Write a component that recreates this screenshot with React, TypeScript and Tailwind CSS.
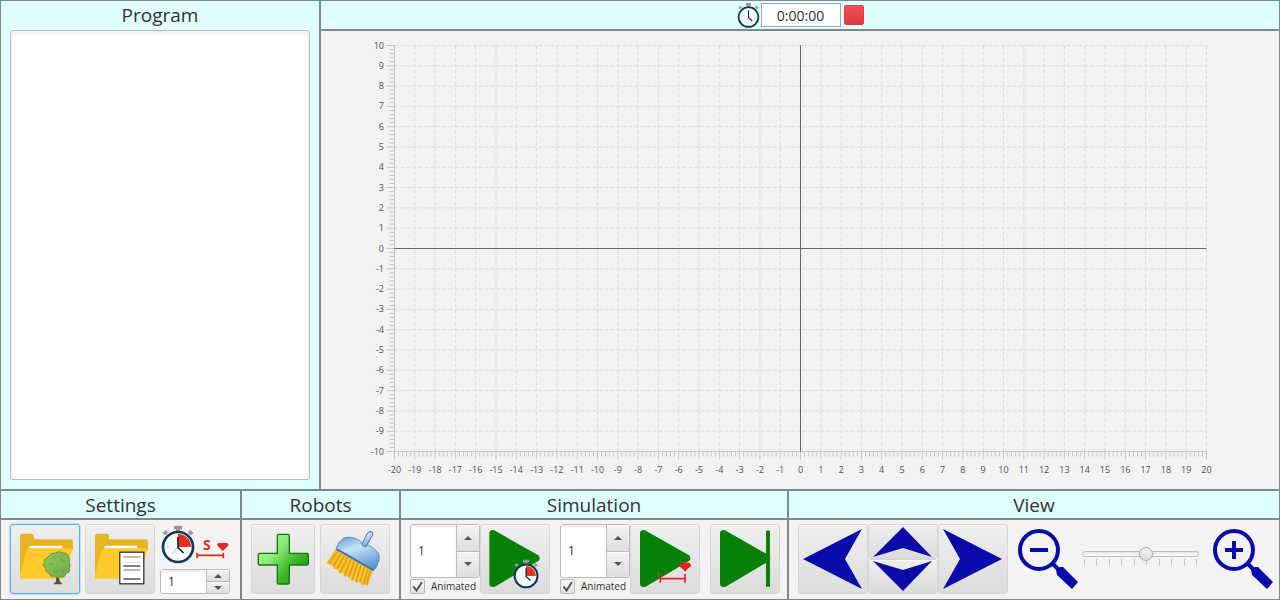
import React, { useId, useState } from "react";

const FONT = "font-['Open_Sans','Noto_Sans',sans-serif]";

const range = (from: number, to: number) =>
  Array.from({ length: to - from + 1 }, (_, i) => from + i);

/* ---------- chart ---------- */

const UNIT = 20.3;
const LEFT = 394.5;
const RIGHT = LEFT + 40 * UNIT;
const TOP = 45.5;
const BOTTOM = TOP + 20 * UNIT;
const xAt = (v: number) => LEFT + (v + 20) * UNIT;
const yAt = (v: number) => BOTTOM - (v + 10) * UNIT;

function Chart() {
  return (
    <svg viewBox="321 31 958 458" className="block h-full w-full" role="img" aria-label="Robot field">
      <g stroke="#dcdcdc" strokeDasharray="4 2" fill="none">
        {range(-19, 20).map((v) => (
          <path key={`x${v}`} d={`M${xAt(v)} ${BOTTOM}V${TOP}`} />
        ))}
        {range(-9, 10).map((v) => (
          <path key={`y${v}`} d={`M${LEFT} ${yAt(v)}H${RIGHT}`} />
        ))}
      </g>
      <g stroke="#c4c4c4" fill="none">
        {range(0, 200).map((i) => (
          <path key={`mx${i}`} d={`M${LEFT + (i * UNIT) / 5} ${BOTTOM}v${i % 5 ? 5 : 8}`} />
        ))}
        {range(0, 100).map((i) => (
          <path key={`my${i}`} d={`M${LEFT} ${BOTTOM - (i * UNIT) / 5}h${i % 5 ? -5 : -8}`} />
        ))}
        <path d={`M${LEFT} ${TOP}V${BOTTOM}H${RIGHT}`} />
      </g>
      <path d={`M800.5 ${TOP - 0.5}V${BOTTOM}M${LEFT} 248.5H${RIGHT}`} stroke="#666" fill="none" />
      <g fill="#505050" fontSize="9">
        {range(-20, 20).map((v) => (
          <text key={`tx${v}`} x={xAt(v)} y="473" textAnchor="middle">
            {v}
          </text>
        ))}
        {range(-10, 10).map((v) => (
          <text key={`ty${v}`} x="384" y={yAt(v) + 3} textAnchor="end">
            {v}
          </text>
        ))}
      </g>
    </svg>
  );
}

/* ---------- icons ---------- */

function WatchFace({ wedge }: { wedge: boolean }) {
  return (
    <g>
      <path d="M37 0h24v11h-24zM43 11h12v6h-12zM2 22l11-9 7 8-9 8zM96 22l-11-9-7 8 9 8z" fill="#999" />
      <circle cx="49" cy="64" r="45" fill="#f8fbfd" stroke="#0b3958" strokeWidth="8" />
      {wedge && <path d="M49 64V25a39 39 0 0 1 39 39z" fill="#e7301a" />}
      <path d="M49 64L33 82M16 64h5M77 64h5M49 97v5" stroke="#b9c2c9" strokeWidth="3" />
      <path d="M49 34V66L66 82" fill="none" stroke="#12263a" strokeWidth="5" />
    </g>
  );
}

function RangeIcon() {
  return (
    <svg viewBox="480 121 210 129" className="h-[43px] w-[70px]" aria-hidden="true">
      <g transform="translate(485 126)">
        <WatchFace wedge />
      </g>
      <text x="609" y="198" fontSize="42" fontWeight="700" fill="#e02b18">
        S
      </text>
      <path d="M591 215h79M591 207v17M670 207v17" stroke="#e02b18" strokeWidth="5" fill="none" />
      <path d="M651 183l4-5h27l4 5-5 7-13 12-12-12z" fill="#e02b18" />
    </svg>
  );
}

function Folder() {
  return (
    <g>
      <path d="M60 155q0-8 8-8h26q8 0 8 9v8h110q6 0 7 7v24H200L70 280H60z" fill="#e6b526" />
      <path d="M88 186q0-3 3-3h93q3 0 3 3v14H88z" fill="#fff" />
      <path d="M86 191h124q7 0 6 7l-20 77q-2 7-9 7H64q-7 0-4-9l19-76q2-6 7-6z" fill="#ffca28" />
    </g>
  );
}

function FolderTreeIcon() {
  const id = useId();
  return (
    <svg viewBox="30 118 210 210" className="size-[70px]" aria-hidden="true">
      <defs>
        <linearGradient id={id} x1="0" y1="0" x2="1" y2="1">
          <stop offset="0" stopColor="#93c85f" />
          <stop offset="1" stopColor="#6dab47" />
        </linearGradient>
      </defs>
      <Folder />
      <path d="M166 262h12q-2 24 3 30l7 7h-29l8-7q3-10-1-30z" fill="#6a4a3a" />
      <path
        d="M150 212q4-8 16-7 12-8 24 0 14-1 15 12 8 8 2 16 7 9 1 17 4 14-10 16-4 14-18 10-9 7-16-1-14 2-17-10-13-3-9-14-12-7-5-17-2-13 9-13 0-6 8-9z"
        fill={`url(#${id})`}
        stroke="#5f9a3d"
        strokeWidth="3"
      />
      <path d="M146 236q8 7 15 0M182 222q3 9 12 8M160 260q9 5 15-3M188 252q-2 10 7 12M158 214q8 0 8 9" fill="none" stroke="#5f9a3d" strokeWidth="2.5" />
    </svg>
  );
}

function FolderListIcon() {
  return (
    <svg viewBox="30 118 210 210" className="size-[70px]" aria-hidden="true">
      <Folder />
      <rect x="134.500" y="202.500" width="72" height="95" fill="#fff" stroke="#000" strokeWidth="3" />
      <path d="M145 217h51M145 256h51" stroke="#777" strokeWidth="3" />
      <path d="M145 233h51" stroke="#ddd" strokeWidth="3" />
      <path d="M145 244h51M145 283h51" stroke="#000" strokeWidth="3" />
    </svg>
  );
}

function PlusIcon() {
  const id = useId();
  return (
    <svg viewBox="33 118 192 210" className="h-[70px] w-[64px]" aria-hidden="true">
      <defs>
        <linearGradient id={id} x1="0" y1="0.1" x2="1" y2="0.9">
          <stop offset="0" stopColor="#b4ff9c" />
          <stop offset="0.35" stopColor="#8ee878" />
          <stop offset="0.65" stopColor="#3db82a" />
          <stop offset="1" stopColor="#0e8f08" />
        </linearGradient>
      </defs>
      <path
        d="M116 149h28q4 0 4 4v53h53q4 0 4 4v27q0 4-4 4h-53v53q0 4-4 4h-28q-4 0-4-4v-53H59q-4 0-4-4v-27q0-4 4-4h53v-53q0-4 4-4z"
        fill={`url(#${id})`}
        stroke="#0b7d08"
        strokeWidth="4"
      />
    </svg>
  );
}

function BroomIcon() {
  const id = useId();
  return (
    <svg viewBox="241 118 210 210" className="size-[70px]" aria-hidden="true">
      <defs>
        <linearGradient id={id} x1="0.2" y1="0" x2="0.7" y2="1">
          <stop offset="0" stopColor="#6ea6da" />
          <stop offset="0.35" stopColor="#c9e2f7" />
          <stop offset="1" stopColor="#5590cc" />
        </linearGradient>
      </defs>
      <path d="M288 194L400 258 383 305 374 299 368 302 359 291 351 295 343 283 334 287 326 274 317 277 309 264 301 267 292 253 284 254 278 243 261 235z" fill="#f5b51c" />
      <path
        d="M294 200l-25 36M304 206l-23 38M314 212l-22 40M324 218l-22 44M334 224l-20 48M344 230l-18 50M354 236l-17 52M364 241l-15 50M374 247l-13 46M384 253l-12 46M392 257l-12 44"
        stroke="#d28f10"
        strokeWidth="2.5"
      />
      <path d="M299 203l-24 36M309 209l-22 39M319 215l-21 42M329 221l-20 46M339 227l-18 48M349 233l-17 50M359 239l-16 48M369 245l-14 46M379 250l-12 46" stroke="#ffd84c" strokeWidth="2.5" />
      <path d="M366 181l17-35q6-9 14-4 4 4 1 11l-20 34z" fill={`url(#${id})`} stroke="#3c74b4" strokeWidth="3" />
      <path
        d="M290 190q8-22 25-31 24-6 48 11l5 12q5 7 12 4l5-5q21 9 32 25 5 15-3 33-5 14-14 19L290 195z"
        fill={`url(#${id})`}
        stroke="#3c74b4"
        strokeWidth="2"
      />
      <path d="M291 193L402 256" stroke="#3c74b4" strokeWidth="5" />
    </svg>
  );
}

function Play() {
  const id = useId();
  return (
    <g>
      <defs>
        <pattern id={id} width="29" height="23" patternUnits="userSpaceOnUse">
          <rect width="29" height="23" fill="#038003" />
          <path d="M3 4h3M17 2h3M24 9h3M10 11h3M2 18h3M19 17h3M12 20h3" stroke="#128c12" strokeWidth="3" />
        </pattern>
      </defs>
      <path d="M270 145q0-8 10-9 5 0 10 4l127 72q4 3 4 9 0 5-4 8L292 303q-5 4-12 4-10-1-10-8z" fill={`url(#${id})`} />
    </g>
  );
}

function PlayTimeIcon() {
  return (
    <svg viewBox="242 118 210 210" className="size-[70px]" aria-hidden="true">
      <Play />
      <g transform="translate(343 225) scale(.76)">
        <WatchFace wedge />
      </g>
    </svg>
  );
}

function PlayRangeIcon() {
  return (
    <svg viewBox="240 118 210 210" className="size-[70px]" aria-hidden="true">
      <Play />
      <path d="M331 282h74M331 268v26M405 268v26" stroke="#ee1c24" strokeWidth="5" fill="none" />
      <path d="M387 240l6-6h24l6 6-1 5-9 7-7 9-9-9-9-7z" fill="#ee1c24" />
    </svg>
  );
}

function PlayEndIcon() {
  return (
    <svg viewBox="240 118 210 210" className="size-[70px]" aria-hidden="true">
      <Play />
      <path d="M408 138h12v168h-12z" fill="#038003" />
    </svg>
  );
}

function MagnifierIcon({ plus }: { plus?: boolean }) {
  return (
    <svg viewBox="0 0 60 60" className="size-[60px]" aria-hidden="true">
      <circle cx="21" cy="21" r="19" fill="none" stroke="#0a0aab" strokeWidth="4" />
      <path d={plus ? "M12 21h18M21 12v18" : "M12 21h18"} stroke="#0a0aab" strokeWidth="4" />
      <path d="M34 34l7 7" stroke="#0a0aab" strokeWidth="4" />
      <path d="M38 41l4-3h3l15 15-6 7-15-14z" fill="#0a0aab" />
    </svg>
  );
}

function Arrow({ d, className, box }: { d: string; className: string; box: string }) {
  return (
    <svg viewBox={box} className={className} aria-hidden="true">
      <path d={d} fill="#0a0aab" />
    </svg>
  );
}

/* ---------- controls ---------- */

type ToolButtonProps = { label: string; focused?: boolean; className?: string; children: React.ReactNode };

function ToolButton({ label, focused, className = "", children }: ToolButtonProps) {
  const frame = focused
    ? "border-[#4fb6dc] shadow-[0_0_2px_#4fb6dc]"
    : "border-[#d6d6d6] shadow-[inset_0_1px_0_#fafafa]";
  return (
    <button
      type="button"
      aria-label={label}
      className={`flex shrink-0 items-center justify-center overflow-hidden rounded-[3px] border bg-linear-to-b from-[#efefef] to-[#dcdcdc] [&>svg]:shrink-0 ${frame} ${className}`}
    >
      {children}
    </button>
  );
}

function Spinner({ label, className }: { label: string; className: string }) {
  const [value, setValue] = useState(1);
  const step =
    "flex flex-1 items-center justify-center bg-linear-to-b from-[#f4f4f4] to-[#dedede] shadow-[inset_0_1px_0_#fff]";
  return (
    <div className={`flex w-[70px] overflow-hidden rounded-[3px] border border-[#bcbcbc] bg-white ${className}`}>
      <input
        aria-label={label}
        value={value}
        onChange={(e) => setValue(Number(e.target.value) || 0)}
        className="w-0 min-w-0 flex-1 bg-transparent pl-[7px] text-xs text-[#323232] shadow-[inset_0_2px_2px_#eee] outline-none"
      />
      <div className="flex w-[23px] flex-col border-l border-[#bcbcbc]">
        <button type="button" aria-label={`${label} up`} onClick={() => setValue(value + 1)} className={step}>
          <svg viewBox="0 0 8 4" className="h-1 w-2" aria-hidden="true">
            <path d="M0 4L4 0 8 4z" fill="#555" />
          </svg>
        </button>
        <button
          type="button"
          aria-label={`${label} down`}
          onClick={() => setValue(value - 1)}
          className={`border-t border-[#bcbcbc] ${step}`}
        >
          <svg viewBox="0 0 8 4" className="h-1 w-2" aria-hidden="true">
            <path d="M0 0L4 4 8 0z" fill="#555" />
          </svg>
        </button>
      </div>
    </div>
  );
}

function AnimatedSpinner({ label }: { label: string }) {
  return (
    <div className="flex w-[70px] shrink-0 flex-col gap-px">
      <Spinner label={label} className="h-[54px]" />
      <label className="flex items-center gap-1.5 text-[10px] leading-[15px] text-[#323232]">
        <span className="grid shrink-0">
          <input
            type="checkbox"
            defaultChecked
            className="peer col-start-1 row-start-1 size-[15px] appearance-none rounded-[2px] border border-[#b8b8b8] bg-linear-to-b from-[#f8f8f8] to-[#e0e0e0]"
          />
          <svg viewBox="0 0 15 15" className="pointer-events-none invisible col-start-1 row-start-1 size-[15px] peer-checked:visible" aria-hidden="true">
            <path d="M3.500 7.500l3 4L12 3" fill="none" stroke="#555" strokeWidth="2" />
          </svg>
        </span>
        Animated
      </label>
    </div>
  );
}

function Panel({ title, className = "", bodyClass = "", children }: { title: string; className?: string; bodyClass?: string; children: React.ReactNode }) {
  return (
    <section className={`flex flex-col ${className}`}>
      <h2 className="h-[29px] border border-black/45 bg-[#e0ffff] text-center text-[19px] leading-[28px]">{title}</h2>
      <div className={`flex flex-1 items-start border border-black/45 pt-1 pb-[5px] pl-[9px] ${bodyClass}`}>{children}</div>
    </section>
  );
}

export default function App() {
  return (
    <div className={`flex min-h-screen flex-col bg-[#f3f3f3] text-[#323232] ${FONT}`}>
      <main className="flex flex-1 items-stretch">
        <section className="flex w-1/4 flex-col border border-black/45 bg-[#e0ffff] px-[9px] pb-[9px]">
          <h2 className="text-center text-[19px] leading-[29px]">
            <label htmlFor="program">Program</label>
          </h2>
          <textarea
            id="program"
            className="w-full flex-1 resize-none rounded-[3px] border border-[#bcbcbc] bg-white p-2 text-xs shadow-[inset_0_3px_4px_#eee] outline-none"
          />
        </section>
        <section className="flex flex-1 flex-col">
          <header className="flex h-[30px] items-center justify-center border border-black/45 bg-[#e0ffff]">
            <svg viewBox="0 0 98 114" className="mr-px h-[25px] w-[23px]" aria-hidden="true">
              <WatchFace wedge={false} />
            </svg>
            <input
              aria-label="Elapsed time"
              readOnly
              defaultValue="0:00:00"
              className="h-6 w-20 border border-[#a5a8b0] bg-white text-center text-sm outline-none"
            />
            <button
              type="button"
              aria-label="Stop"
              className="ml-[3px] size-5 rounded-[2px] border border-[#d84040] bg-linear-to-b from-[#f05353] to-[#d93b3b]"
            />
          </header>
          <div className="flex-1 border border-black/45">
            <Chart />
          </div>
        </section>
      </main>

      <footer className="flex items-stretch">
        <Panel title="Settings" className="w-[241px]" bodyClass="gap-[5px]">
          <ToolButton label="Open environment" focused className="size-[70px]">
            <FolderTreeIcon />
          </ToolButton>
          <ToolButton label="Open program" className="size-[70px]">
            <FolderListIcon />
          </ToolButton>
          <div className="flex flex-col gap-[2px]">
            <RangeIcon />
            <Spinner label="Seconds per step" className="h-[25px]" />
          </div>
        </Panel>

        <Panel title="Robots" className="w-[159px]" bodyClass="gap-[5px]">
          <ToolButton label="Add robots" className="h-[70px] w-[64px]">
            <PlusIcon />
          </ToolButton>
          <ToolButton label="Clear robots" className="size-[70px]">
            <BroomIcon />
          </ToolButton>
        </Panel>

        <Panel title="Simulation" className="w-[388px]" bodyClass="gap-2.5">
          <div className="flex">
            <AnimatedSpinner label="Simulation time" />
            <ToolButton label="Run for time" className="size-[70px]">
              <PlayTimeIcon />
            </ToolButton>
          </div>
          <div className="flex">
            <AnimatedSpinner label="Simulation steps" />
            <ToolButton label="Run steps" className="size-[70px]">
              <PlayRangeIcon />
            </ToolButton>
          </div>
          <ToolButton label="Run to end" className="size-[70px]">
            <PlayEndIcon />
          </ToolButton>
        </Panel>

        <Panel title="View" className="flex-1" bodyClass="pr-[6px]">
          <ToolButton label="Move left" className="size-[70px]">
            <Arrow box="0 0 70 70" className="size-[70px]" d="M5 35L64 5 47 35 64 65z" />
          </ToolButton>
          <div className="flex flex-col">
            <ToolButton label="Move up" className="h-[35px] w-[70px]">
              <Arrow box="0 0 70 35" className="h-[35px] w-[70px]" d="M5 33L35 3 64 33 35 24z" />
            </ToolButton>
            <ToolButton label="Move down" className="h-[35px] w-[70px]">
              <Arrow box="0 0 70 35" className="h-[35px] w-[70px]" d="M5 2L35 11 64 2 35 32z" />
            </ToolButton>
          </div>
          <ToolButton label="Move right" className="size-[70px]">
            <Arrow box="0 0 70 70" className="size-[70px]" d="M5 5L64 35 5 65 22 35z" />
          </ToolButton>
          <button type="button" aria-label="Zoom out" className="ml-2.5 flex h-[70px] shrink-0 items-center">
            <MagnifierIcon />
          </button>
          <div className="mx-1 flex min-w-0 flex-1 flex-col pt-[23px] pr-[10px]">
            <input
              type="range"
              aria-label="Zoom"
              min={1}
              max={10}
              defaultValue={6}
              className="relative block h-[14px] w-full appearance-none bg-transparent [&::-webkit-slider-runnable-track]:h-[6px] [&::-webkit-slider-runnable-track]:rounded-full [&::-webkit-slider-runnable-track]:border [&::-webkit-slider-runnable-track]:border-[#bcbcbc] [&::-webkit-slider-runnable-track]:bg-linear-to-b [&::-webkit-slider-runnable-track]:from-[#e4e4e4] [&::-webkit-slider-runnable-track]:to-white [&::-webkit-slider-thumb]:-mt-[5px] [&::-webkit-slider-thumb]:size-[14px] [&::-webkit-slider-thumb]:appearance-none [&::-webkit-slider-thumb]:rounded-full [&::-webkit-slider-thumb]:border [&::-webkit-slider-thumb]:border-[#a8a8a8] [&::-webkit-slider-thumb]:bg-linear-to-b [&::-webkit-slider-thumb]:from-[#f4f4f4] [&::-webkit-slider-thumb]:to-[#dcdcdc]"
            />
            <div className="-mt-[2px] flex justify-between px-[2px]">
              {range(1, 10).map((v) => (
                <span key={v} className="h-[6px] w-px bg-[#c4c4c4]" />
              ))}
            </div>
          </div>
          <button type="button" aria-label="Zoom in" className="flex h-[70px] shrink-0 items-center">
            <MagnifierIcon plus />
          </button>
        </Panel>
      </footer>
    </div>
  );
}
